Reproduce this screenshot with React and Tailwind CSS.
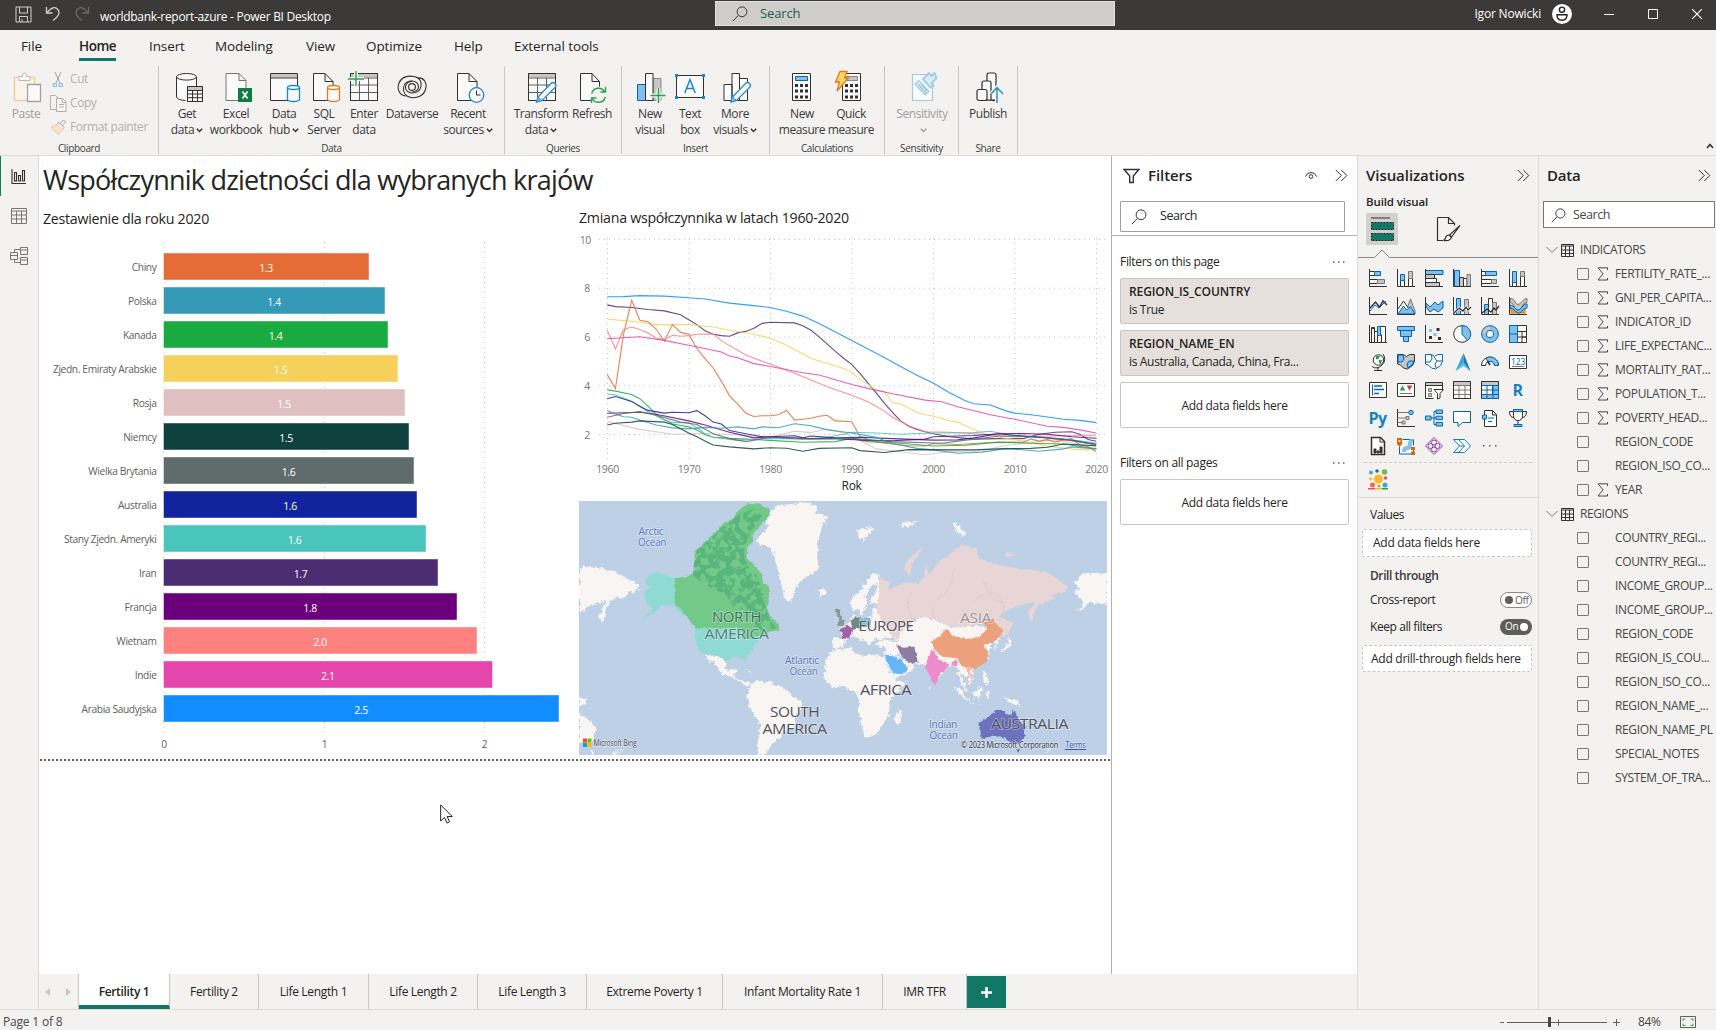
import React from "react";

const K = "#323130";
const B = "#0067b0";
const L = "#83beec";
const G = "#c8c6c4";

function Svg({ w = 30, h = 30, vb, className = "", children }) {
  return (
    <svg width={w} height={h} viewBox={vb || `0 0 ${w} ${h}`} className={"shrink-0 " + className} fill="none" stroke={K} strokeWidth="1">
      {children}
    </svg>
  );
}

/* ---------- shared glyphs ---------- */
const Loupe = ({ size = 16, color = K }) => (
  <Svg w={size} h={size} vb="0 0 16 16">
    <circle cx="10" cy="5.8" r="4.9" stroke={color} />
    <path d="M6.4 9.4L.8 15.2" stroke={color} />
  </Svg>
);
const DoubleChevron = () => (
  <Svg w={13} h={13}>
    <path d="M.8 1l5.5 5.5L.8 12M6.3 1l5.5 5.5L6.3 12" />
  </Svg>
);
const Caret = ({ color = K }) => (
  <Svg w={7} h={5} className="ml-[2px] inline-block">
    <path d="M.8 .8l2.7 2.7L6.2 .8" stroke={color} strokeWidth="1.4" />
  </Svg>
);
const Pencil = () => (
  <g>
    <path d="M11 25L24 11.5q2-2 4 0t0 4L15 28.5l-5.500 1.500z" fill="#fafafa" stroke="#2e8bd0" strokeWidth="1.300" />
    <path d="M11 25l4 3.500-5.500 1.500z" fill={L} stroke="#2e8bd0" />
  </g>
);

/* ---------- ribbon icons (30 x 30) ---------- */
const ribbonIcons = {
  get: (
    <g transform="translate(2 0)">
      <path d="M2.500 5v20q2 3 9 3.500V14h11V5z" fill="#fafafa" stroke="none" />
      <ellipse cx="12.500" cy="4.800" rx="10" ry="3.300" fill="#fafafa" />
      <path d="M2.500 5v20q1 3 9 3.500M22.500 5v9" />
      <path d="M13.500 14.500h15v15h-15z" fill="#fafafa" />
      <path d="M14 15h14v3H14z" fill={G} stroke="none" />
      <path d="M13.500 18.500h15M13.500 22h15M13.500 25.700h15M18.500 18v11M23.500 18v11M13.500 14.500h15v15h-15z" />
    </g>
  ),
  excel: (
    <g transform="translate(1 0)">
      <path d="M4 1.500h13l7 7v20H4z M17 1.500v7h7" fill="#fafafa" stroke="#7a7574" />
      <rect x="16" y="16" width="14" height="14" fill="#107c41" stroke="none" />
      <path d="M20.500 19.500l5 7M25.500 19.500l-5 7" stroke="#fff" strokeWidth="1.700" />
    </g>
  ),
  hub: (
    <g>
      <path d="M1.500 1.500h27v27h-27z" fill="#fafafa" />
      <path d="M2 2h26v3.500H2z" fill={G} stroke="none" />
      <path d="M1.500 6h27" />
      <path d="M18.500 16v11.500q1 2 6 2t6-2V16" fill="#fafafa" stroke="#1a86d0" strokeWidth="1.300" />
      <ellipse cx="24.500" cy="15.500" rx="6" ry="2" fill="#fafafa" stroke="#1a86d0" strokeWidth="1.300" />
    </g>
  ),
  sql: (
    <g transform="translate(1 0)">
      <path d="M3.500 1.500H15l8 8v19H3.500z M15 1.500v8h8" fill="#fafafa" />
      <path d="M17.500 16v11.500q1 2 6 2t6-2V16" fill="#fafafa" stroke="#e07a1f" strokeWidth="1.300" />
      <ellipse cx="23.500" cy="15.500" rx="6" ry="2" fill="#fafafa" stroke="#e07a1f" strokeWidth="1.300" />
    </g>
  ),
  enter: (
    <g>
      <path d="M1.500 1.500h27v27h-27z" fill="#fafafa" />
      <path d="M2 2h26v3.500H2z" fill={G} stroke="none" />
      <path d="M1.500 6h27M1.500 13h27M1.500 20.500h27M10.500 6v22M19.500 6v22" stroke="#605e5c" />
      <path d="M1.500 1.500h27v27h-27z" />
      <path d="M-1 7h16M7-1v16" stroke="#f3f2f1" strokeWidth="4" />
      <path d="M-1 7h16M7-1v15" stroke="#2ca04c" strokeWidth="1.400" />
    </g>
  ),
  dataverse: (
    <g strokeWidth="1.100">
      <path d="M9.500 24C3 24-.5 17.500 2 11 4.500 5 11 3.500 17 4.500s8 5.500 7 10-5 6.500-9 6.500-7-3-6.500-6.500S12 9 15 9.500" />
      <path d="M20.500 6C27 5 30.500 11 28.500 17.500S20 26.500 14 25.500 6 20 6.500 15.500 11 8.500 15.500 9s6 3 6 6-3 5-6.500 5" />
      <circle cx="15" cy="15" r="3.400" />
    </g>
  ),
  recent: (
    <g transform="translate(1 0)">
      <path d="M3.500 1.500H15l8 8v19H3.500z M15 1.500v8h8" fill="#fafafa" />
      <circle cx="22.500" cy="23" r="7.300" fill="#fafafa" stroke="#1a86d0" strokeWidth="1.300" />
      <path d="M22.500 18.500V23H26.500" />
    </g>
  ),
  transform: (
    <g transform="translate(1 0)">
      <path d="M1.500 1.500h27v27h-27z" fill="#fafafa" />
      <path d="M2 2h26v3.500H2z" fill={G} stroke="none" />
      <path d="M1.500 6h27M1.500 13h27M1.500 20.500h27M10.500 6v22M19.500 6v22" stroke="#605e5c" />
      <path d="M1.500 1.500h27v27h-27z" />
      <Pencil />
    </g>
  ),
  refresh: (
    <g transform="translate(-1 0)">
      <path d="M4.500 1.500H16l7.500 8v19h-19z M16 1.500v8h7.500" fill="#fafafa" />
      <circle cx="22.500" cy="23" r="8.500" fill="#f3f2f1" stroke="none" />
      <path d="M15.700 21.500a7 7 0 0 1 13-1.500M29.300 25a7 7 0 0 1-13 1.500M29.500 15v5h-5M15.500 31v-5h5" stroke="#2ca04c" strokeWidth="1.400" />
    </g>
  ),
  newVisual: (
    <g>
      <path d="M2.500 12.500h8v16h-8z" fill={L} stroke={B} />
      <path d="M18 6.500h8v22h-8z" fill={G} stroke="#8a8886" />
      <path d="M10.500 1.500H18v27h-7.500z" fill="#fafafa" />
      <path d="M16 23.500h14M23.500 16v14" stroke="#f3f2f1" strokeWidth="4" />
      <path d="M15.500 23.500h15M23.500 16v15" stroke="#2ca04c" strokeWidth="1.400" />
    </g>
  ),
  textBox: (
    <g>
      <path d="M1.500 3.500h27v22h-27z" fill="#fafafa" />
      <path d="M0 2h3v3H0zM27 2h3v3h-3zM0 24h3v3H0zM27 24h3v3h-3z" fill="#1a86d0" stroke="none" />
      <path d="M9.800 21L15 7.500 20.200 21M11.500 16.500h7" stroke="#1a86d0" strokeWidth="1.500" />
    </g>
  ),
  moreVisuals: (
    <g transform="translate(1.500 0)">
      <path d="M2.500 12.500h8v16h-8zM18 6.500h8v22h-8zM10.500 1.500H18v27h-7.500z" fill="#fafafa" />
      <Pencil />
    </g>
  ),
  calc: (
    <g>
      <path d="M5.500 1.500h18v27h-18z" fill="#fafafa" />
      <path d="M8.500 4.500h12v4h-12z" fill={L} stroke={B} />
      <path d="M8 12h3v3H8zM13 12h3v3h-3zM18 12h3v3h-3zM8 17.500h3v3H8zM13 17.500h3v3h-3zM18 17.500h3v3h-3zM8 23.500h3v3H8zM13 23.500h3v3h-3zM18 23.500h3v3h-3z" fill={K} stroke="none" />
    </g>
  ),
  quick: (
    <g transform="translate(1 0)">
      <path d="M5.500 1.500h18v27h-18z" fill="#fafafa" />
      <path d="M8.500 4.500h12v4h-12z" fill={G} stroke="#8a8886" />
      <path d="M8 12h3v3H8zM13 12h3v3h-3zM18 12h3v3h-3zM8 17.500h3v3H8zM13 17.500h3v3h-3zM18 17.500h3v3h-3zM8 23.500h3v3H8zM13 23.500h3v3h-3zM18 23.500h3v3h-3z" fill={K} stroke="none" />
      <path d="M3-.5h7L7.500 6h4L0 19l2.500-9H-1.500z" fill="#ffd56b" stroke="#e07a1f" strokeWidth="1.300" />
    </g>
  ),
  sensitivity: (
    <g stroke="#9fcbe6" strokeWidth="1.200">
      <path d="M5.500 2.500h20v26h-20z" fill="#f8fafb" />
      <path d="M8 12l4-3.500 10 11-4 3.500zM11 12l8 9M14 12l6 7" fill="#d8ebf7" />
      <path d="M16 7l6-6 2.500 3 3-3 2 5-5 5.500 2 2-3 2z" fill="#d8ebf7" strokeWidth="1.800" />
    </g>
  ),
  publish: (
    <g strokeWidth="1.200" transform="translate(2.500 0)">
      <path d="M11.500 10V3q0-2 2-2h5q2 0 2 2v25h-9M11.500 10" fill="#fafafa" />
      <path d="M6.500 18v-7q0-2 2-2h5q2 0 2 2v17h-8" fill="#fafafa" />
      <rect x="1.500" y="17.500" width="10" height="11" rx="2" fill="#fafafa" />
      <path d="M16 28.500h5" />
      <path d="M21.500 31V16M15.500 22l6-6.500 6 6.500" stroke="#f3f2f1" strokeWidth="4" />
      <path d="M21.500 31V16M15.500 22l6-6.500 6 6.500" stroke="#2b88c8" strokeWidth="1.400" />
    </g>
  ),
};

const ribbon = [
  { name: "Data", w: "w-[346px]", pl: "pl-[4px]", items: [
    ["get", "w-[48px]", "Get", "data", true], ["excel", "w-[50px]", "Excel", "workbook"], ["hub", "w-[46px]", "Data", "hub", true],
    ["sql", "w-[34px]", "SQL", "Server"], ["enter", "w-[46px]", "Enter", "data"], ["dataverse", "w-[50px]", "Dataverse", ""], ["recent", "w-[62px]", "Recent", "sources", true]] },
  { name: "Queries", w: "w-[117px]", pl: "pl-[4px]", items: [["transform", "w-[64px]", "Transform", "data", true], ["refresh", "w-[38px]", "Refresh", ""]] },
  { name: "Insert", w: "w-[148px]", pl: "pl-[6px]", items: [["newVisual", "w-[44px]", "New", "visual"], ["textBox", "w-[36px]", "Text", "box"], ["moreVisuals", "w-[54px]", "More", "visuals", true]] },
  { name: "Calculations", w: "w-[115px]", pl: "pl-[9px]", items: [["calc", "w-[46px]", "New", "measure"], ["quick", "w-[52px]", "Quick", "measure"]] },
  { name: "Sensitivity", w: "w-[74px]", pl: "pl-[5px]", items: [["sensitivity", "w-[64px]", "Sensitivity", "", true, true]] },
  { name: "Share", w: "w-[59px]", pl: "pl-[4px]", items: [["publish", "w-[50px]", "Publish", ""]] },
];

function RibbonButton({ item }) {
  const [icon, w, a, b, caret, off] = item;
  return (
    <div className={`flex shrink-0 flex-col items-center whitespace-nowrap text-[12px] leading-[16px] ${w} ${off ? "text-[#a19f9d]" : "text-[#3b3a39]"}`}>
      <Svg className="mb-[4px] overflow-visible">{ribbonIcons[icon]}</Svg>
      <div>{a}</div>
      <div className="flex h-[16px] items-center">{b}{caret && <Caret color={off ? "#a19f9d" : K} />}</div>
    </div>
  );
}

function Ribbon() {
  return (
    <div className="flex h-[94px] pt-[5px] text-[#3b3a39]">
      <div className="flex h-[88px] w-[159px] flex-col border-r border-[#c8c6c4]">
        <div className="flex h-[79px] pl-[9px] text-[#b3b0ad]">
          <div className="flex w-[34px] flex-col items-center pt-[6px] text-[12px] leading-[16px] text-[#a19f9d]">
            <Svg className="mb-[4px] overflow-visible">
              <g transform="translate(2 0)">
                <path d="M1.500 5.500h20v23h-20z" fill="#faf4ea" stroke="#f0cfa0" strokeWidth="1.500" />
                <path d="M6 8.500v-4h3.500q0-3.500 2-3.500t2 3.500h3.500v4z" fill="#fafafa" stroke="#bcbab8" />
                <path d="M14.500 12.500h13v17h-13z" fill="#fafafa" stroke="#a5a3a1" strokeWidth="1.300" />
              </g>
            </Svg>
            Paste
          </div>
          <div className="ml-[7px] flex flex-col text-[12px]">
            <div className="flex h-[24px] items-center gap-[3px] pt-[2px]">
              <Svg w={17} h={17}>
                <path d="M5 1l5 11M11 1L6 12" stroke="#a5a3a1" />
                <path d="M3 12.500h3.500v3H3zM9 12.500h3.500v3H9z" stroke="#8cc0e4" fill="#cfe6f6" />
              </Svg>
              Cut
            </div>
            <div className="flex h-[24px] items-center gap-[3px] pt-[2px]">
              <Svg w={17} h={17} className="overflow-visible">
                <path d="M.5.5h5l3 3v11h-8z" stroke="#b0aeac" />
                <path d="M6.500 3.500h6l3.500 3.500v9.500h-9.500zM12 3.500v4h4M9 9.500h5M9 12h5" fill="#f8f8f8" stroke="#b0aeac" />
              </Svg>
              Copy
            </div>
            <div className="flex h-[24px] items-center gap-[3px] pt-[2px]">
              <Svg w={17} h={17}>
                <path d="M1 8.500l6-3 5 5-3.500 5z" fill="#f9e2cf" stroke="#eec09a" />
                <path d="M7 5l2-1.500 5 5-1.500 2M10 5l3.500-4 2 2-3.500 4" stroke="#a5a3a1" fill="#f8f8f8" />
              </Svg>
              Format painter
            </div>
          </div>
        </div>
        <div className="text-center text-[10px] leading-[12px]">Clipboard</div>
      </div>
      {ribbon.map((g) => (
        <div key={g.name} className={`flex h-[88px] shrink-0 flex-col border-r border-[#c8c6c4] ${g.w}`}>
          <div className={`flex h-[79px] pt-[6px] ${g.pl}`}>
            {g.items.map((it, i) => <RibbonButton key={i} item={it} />)}
          </div>
          <div className="text-center text-[10px] leading-[12px]">{g.name}</div>
        </div>
      ))}
      <div className="flex flex-1 items-end justify-end pr-[2px] pb-[6px]">
        <Svg w={8} h={6}><path d="M1 5l3-3.500L7 5" strokeWidth="1.600" /></Svg>
      </div>
    </div>
  );
}

function TitleBar() {
  return (
    <div className="flex h-[30px] items-center bg-[#3b3a38] text-[12px] text-white">
      <div className="flex w-[715px] items-center">
        <Svg w={17} h={17} className="ml-[15px] -mt-[2px]">
          <g stroke="#d2d0ce"><path d="M1 1h15v15H1zM4.500 1v6h8V1M4.500 16v-5.500h8V16M7 13v3" /></g>
        </Svg>
        <Svg w={15} h={16} className="ml-[13px] -mt-[2px]"><path d="M1.500 1v6h6M2 6.500Q9-1.500 12.800 3.500T8 14.500" stroke="#d2d0ce" strokeWidth="1.300" /></Svg>
        <Svg w={15} h={16} className="ml-[15px] -mt-[2px]"><path d="M13.500 1v6h-6M13 6.500Q6-1.500 2.200 3.500T7 14.500" stroke="#6b6967" strokeWidth="1.300" /></Svg>
        <div className="ml-[10px] pt-[3px] tracking-[-0.025em]!">worldbank-report-azure - Power BI Desktop</div>
      </div>
      <div className="mb-[4px] flex h-[25px] w-[400px] items-center gap-[12px] border border-[#e1dfdd] bg-[#cfcecc] pt-[1px] pl-[16px] text-[13px] text-[#1d5a50] tracking-[-0.01em]!">
        <Loupe size={16} color="#3b3a39" />
        Search
      </div>
      <div className="mb-[3px] flex flex-1 items-center justify-end">
        <span className="tracking-[-0.015em]!">Igor Nowicki</span>
        <Svg w={20} h={20} className="ml-[11px]">
          <circle cx="10" cy="10" r="10" fill="#fff" stroke="none" />
          <circle cx="10" cy="5.700" r="2.600" stroke="#222" strokeWidth="1.400" />
          <path d="M5 10.800h10q0 5.500-5 5.500t-5-5.500z" stroke="#222" strokeWidth="1.400" />
        </Svg>
        <Svg w={10} h={12} className="ml-[32px]"><path d="M0 6.500h10" stroke="#fff" /></Svg>
        <Svg w={10} h={10} className="ml-[34px]"><path d="M.5.5h9v9h-9z" stroke="#fff" /></Svg>
        <Svg w={10} h={10} className="mr-[14px] ml-[34px]"><path d="M0 0l10 10M10 0L0 10" stroke="#fff" strokeWidth="1.200" /></Svg>
      </div>
    </div>
  );
}

function MenuBar() {
  const tabs = [["File", "w-[58px]"], ["Home", "w-[70px]"], ["Insert", "w-[66px]"], ["Modeling", "w-[91px]"], ["View", "w-[60px]"], ["Optimize", "w-[88px]"], ["Help", "w-[60px]"], ["External tools", "w-[100px]"]];
  return (
    <div className="flex h-[31px] pl-[21px] text-[13.500px] leading-[28px] text-[#252423]">
      {tabs.map(([t, w]) => (
        <div key={t} className={w}>
          <span className={"inline-block h-[31px] whitespace-nowrap pt-[2px] " + (t === "Home" ? "border-b-[3px] border-[#117865] font-semibold" : "tracking-[-0.008em]!")}>{t}</span>
        </div>
      ))}
    </div>
  );
}

/* ---------- left rail ---------- */
function Rail() {
  return (
    <div className="flex w-[39px] shrink-0 flex-col border-r border-[#dddbd9] bg-[#f3f2f1]">
      <div className="flex h-[40px] items-center border-l border-[#117865] pl-[10px]">
        <Svg w={15} h={15}><path d="M1 0v14.500h14M3.500 3.500h2V12h-2zM7.500 6.500h2V12h-2zM11.500 1.500h2V12h-2z" strokeWidth="1.100" /></Svg>
      </div>
      <div className="flex h-[40px] items-center pl-[11px]">
        <Svg w={16} h={16}><path d="M.5.500h15v15H.5zM.5 3h15M.5 7h15M.5 11h15M5.500 3v12.500M10.500 3v12.500" stroke="#797775" /></Svg>
      </div>
      <div className="flex h-[40px] items-center pl-[10px]">
        <Svg w={18} h={18}><path d="M.5 5.500h7v7h-7zM.5 8.500h7M10.500.5h7v7h-7zM10.500 3h7M10.500 10.500h7v7h-7zM10.500 13h7M4.500 5.500V2.500h6M4.500 12.500v3h6" stroke="#797775" /></Svg>
      </div>
    </div>
  );
}

/* ---------- bar chart ---------- */
const bars = [
  ["Chiny", "1.3", 205, "#e66c37"], ["Polska", "1.4", 221, "#3599b8"], ["Kanada", "1.4", 224, "#1aab40"],
  ["Zjedn. Emiraty Arabskie", "1.5", 234, "#f5d15b"], ["Rosja", "1.5", 241, "#dfbfbf"], ["Niemcy", "1.5", 245, "#0f423f"],
  ["Wielka Brytania", "1.6", 250, "#606b6b"], ["Australia", "1.6", 253, "#12239e"], ["Stany Zjedn. Ameryki", "1.6", 262, "#49c5bb"],
  ["Iran", "1.7", 274, "#4a2d73"], ["Francja", "1.8", 293, "#6a007b"], ["Wietnam", "2.0", 313, "#fd817e"],
  ["Indie", "2.1", 328.5, "#e645ab"], ["Arabia Saudyjska", "2.5", 395, "#118dff"],
];

function BarChart() {
  return (
    <svg width="530" height="515" viewBox="39 240 530 515" className="block text-[10.200px]">
      {[164, 324.500, 484.500].map((x, i) => (
        <g key={x}>
          <path d={`M${x} 242V736`} stroke="#c8c6c4" strokeDasharray="1 4" />
          <text x={x} y="748" textAnchor="middle" fill="#605e5c">{i}</text>
        </g>
      ))}
      {bars.map(([n, v, w, c], i) => (
        <g key={n}>
          <rect x="163.500" y={253 + i * 34} width={w + 0.5} height="27" fill={c} />
          <rect x="163.500" y={253 + i * 34} width={w + 0.5} height="27" fill="none" stroke="#fff" strokeOpacity=".45" />
          <text x="156.500" y={270.5 + i * 34} textAnchor="end" fill="#605e5c">{n}</text>
          <text x={163.5 + w / 2} y={271.5 + i * 34} textAnchor="middle" fill="#fff" fontSize="10.500" fontWeight="500">{v}</text>
        </g>
      ))}
    </svg>
  );
}

/* ---------- line chart: year offset from 1960, value ---------- */
const series = [
  ["#dfbfbf", "0 2.52 1 2.44 4 2.2 8 2 12 2.03 16 1.98 20 1.87 23 2.13 25 2.07 27 2.23 29 2.05 31 1.75 33 1.4 36 1.28 39 1.16 42 1.28 46 1.32 49 1.55 53 1.7 55 1.78 58 1.58 60 1.5"],
  ["#118dff", "0 7.64 2 7.65 4 7.69 7 7.67 10 7.6 12 7.55 15 7.38 18 7.28 20 7.2 22 7.05 24 6.85 26 6.55 28 6.2 30 5.85 32 5.5 34 5.15 36 4.78 38 4.42 40 4.1 42 3.7 44 3.36 45 3.25 47 3.2 49 2.95 50 2.87 52 2.8 54 2.71 56 2.62 58 2.57 60 2.48"],
  ["#4a2d73", "0 7.31 1 7.24 3 7.2 5 7.12 7 7.06 9 6.9 10 6.7 11 6.5 12 6.25 13 6.1 14 6.05 15 6.02 16 6.16 17 6.22 18 6.35 19 6.55 20 6.6 23 6.57 24 6.45 25 6.27 26 6 27 5.7 28 5.4 29 5.12 30 4.87 31 4.5 32 4.1 33 3.7 34 3.28 35 2.9 36 2.55 37 2.33 38 2.2 39 2.1 40 2.02 42 1.9 45 1.8 48 1.82 51 1.82 53 2 55 2.08 57 2.1 58 2 59 1.78 60 1.71"],
  ["#f5d15b", "0 6.73 4 6.6 6 6.5 10 6.5 13 6.4 15 6.27 18 6.1 20 5.95 22 5.65 25 5.12 27 4.9 29 4.7 30 4.55 31 4.25 32 4.05 33 3.8 34 3.75 35 3.3 36 3.25 38 2.9 39 2.8 40 2.75 42 2.55 43 2.5 44 2.35 46 2.05 48 1.88 50 1.78 52 1.65 54 1.5 57 1.4 59 1.35 60 1.46"],
  ["#e66c37", "0 4.45 1 3.87 2 6.1 3 7.5 4 6.68 5 6.62 6 6.32 7 5.82 8 6.5 9 6.18 10 6.1 11 5.52 12 5.1 13 4.72 14 4.18 15 3.58 16 3.25 17 2.86 18 2.73 19 2.76 20 2.76 21 2.8 22 2.98 23 2.58 24 2.62 25 2.66 26 2.74 27 2.78 28 2.55 30 2.51 31 1.92 32 1.78 34 1.63 37 1.53 39 1.52 40 1.62 43 1.58 47 1.66 50 1.68 51 1.67 52 1.8 53 1.72 54 1.78 55 1.68 56 1.77 57 1.82 58 1.56 59 1.5 60 1.28"],
  ["#fd817e", "0 6.27 1 5.5 2 6.3 3 6.4 4 6.3 5 6.15 6 5.95 7 5.88 8 6.06 9 6.02 10 6.05 11 6.1 13 6.12 14 5.83 17 5.25 20 4.88 23 4.5 27 3.95 30 3.6 32 3.33 34 2.95 35 2.7 37 2.35 39 2.1 42 2.08 45 2.02 50 1.9 55 1.93 60 1.96"],
  ["#e645ab", "0 5.92 4 6 7 5.85 10 5.65 14 5.38 15 5.21 16 5.14 18 4.9 20 4.78 24 4.52 26 4.43 30 4.04 32 3.88 35 3.66 39 3.4 41 3.33 43 3.13 47 2.8 50 2.62 54 2.33 56 2.28 58 2.18 60 2.05"],
  ["#1aab40", "0 3.82 1 3.77 3 3.63 4 3.46 5 3.15 6 2.82 7 2.6 8 2.42 10 2.3 11 2.18 12 1.98 13 1.88 15 1.83 17 1.8 20 1.75 24 1.67 28 1.7 30 1.83 32 1.7 36 1.63 40 1.52 44 1.55 48 1.68 52 1.63 56 1.6 58 1.5 60 1.4"],
  ["#49c5bb", "0 3.65 1 3.62 3 3.35 5 2.92 7 2.58 8 2.48 10 2.48 11 2.27 12 2.02 13 1.88 16 1.75 20 1.83 24 1.8 27 1.87 29 2 30 2.08 33 2.05 36 2 40 2.05 45 2.07 47 2.12 49 2 52 1.88 55 1.84 58 1.73 60 1.63"],
  ["#12239e", "0 3.46 1 3.55 3 3.35 4 3.15 5 2.98 7 2.87 8 2.9 10 2.88 11 2.97 12 2.76 13 2.5 14 2.42 15 2.15 17 2.02 19 1.9 20 1.9 23 1.94 24 1.85 25 1.93 28 1.85 31 1.88 35 1.82 40 1.76 43 1.77 45 1.85 48 2.02 50 1.95 53 1.88 57 1.75 60 1.59"],
  ["#6a007b", "0 2.86 2 2.88 4 2.9 6 2.82 10 2.55 12 2.38 15 2.08 18 1.85 20 1.9 24 1.83 28 1.82 32 1.75 35 1.73 39 1.8 40 1.9 45 1.95 48 2.02 51 2.03 54 2 57 1.9 60 1.84"],
  ["#3599b8", "0 2.98 1 2.83 2 2.72 3 2.7 4 2.58 6 2.38 8 2.26 10 2.22 12 2.28 14 2.25 16 2.3 18 2.22 19 2.3 21 2.27 23 2.43 25 2.35 27 2.18 30 2.05 33 1.87 35 1.62 38 1.42 40 1.36 43 1.22 46 1.27 49 1.42 53 1.3 56 1.4 57 1.48 60 1.4"],
  ["#606b6b", "0 2.7 2 2.85 4 2.93 6 2.78 9 2.5 11 2.4 13 2.02 15 1.82 17 1.7 20 1.88 25 1.8 30 1.83 35 1.7 41 1.63 44 1.76 48 1.92 52 1.92 56 1.8 60 1.56"],
  ["#0f423f", "0 2.38 1 2.45 3 2.5 4 2.55 7 2.5 8 2.4 10 2.05 11 1.9 12 1.72 13 1.56 15 1.48 18 1.4 20 1.45 22 1.43 24 1.3 26 1.42 30 1.45 31 1.33 34 1.25 37 1.37 45 1.36 48 1.4 52 1.42 54 1.47 56 1.6 60 1.53"],
];
const toPoints = (s) => {
  const n = s.split(" ").map(Number);
  const out = [];
  for (let i = 0; i < n.length; i += 2) out.push(`${(607.2 + n[i] * 8.15).toFixed(1)},${(239.3 + (10 - n[i + 1]) * 24.37).toFixed(1)}`);
  return out.join(" ");
};

function LineChart() {
  return (
    <svg width="534" height="265" viewBox="577 233 534 265" className="block text-[10.500px]">
      {[0, 1, 2, 3, 4].map((i) => {
        const y = 239.5 + i * 48.75;
        return (
          <g key={i}>
            <path d={`M599 ${y}H1105`} stroke="#c8c6c4" strokeDasharray="1 4" />
            <text x={i ? 590 : 591} y={y + 4} textAnchor="end" fill="#797775">{10 - i * 2}</text>
          </g>
        );
      })}
      {[0, 1, 2, 3, 4, 5, 6].map((i) => {
        const x = 607.5 + i * 81.5;
        return (
          <g key={i}>
            <path d={`M${x} 238V460`} stroke="#c8c6c4" strokeDasharray="1 4" />
            <text x={x} y="472.500" textAnchor="middle" fill="#797775">{1960 + i * 10}</text>
          </g>
        );
      })}
      {series.map(([c, s]) => <polyline key={c} points={toPoints(s)} fill="none" stroke={c} strokeWidth="1.100" strokeOpacity=".85" />)}
      <text x="851.500" y="489.500" textAnchor="middle" fill="#252423" fontSize="12" textLength="20">Rok</text>
    </svg>
  );
}

/* ---------- map ---------- */
const land = [
  "M390 478L420 482 440 492 448 500 445 518 455 530 475 520 482 530 468 540 480 548 500 560 528 568 522 574 495 566 470 548 440 535 425 520 405 490 410 508 395 495Z",
  "M520 570L540 558 575 562 600 572 625 582 640 603 665 618 668 640 650 665 645 695 620 705 600 730 585 745 570 765 560 780 538 780 540 740 548 690 530 660 512 620 510 600Z",
  "M540 130L570 100 562 70 580 50 600 30 640 28 680 20 715 35 705 55 742 65 725 95 715 130 712 180 715 225 680 245 660 265 645 290 635 320 622 318 610 280 600 230 590 180 565 150 545 150Z",
  "M712 285L735 282 740 295 720 302Z",
  "M26 222L50 215 85 220 130 232 165 250 200 275 195 285 170 290 160 310 130 305 115 322 105 345 95 385 85 370 90 345 105 320 80 325 50 335 40 350 26 347Z",
  "M26 605L50 615 40 630 26 630ZM26 652L45 665 75 700 68 735 26 745ZM60 760L70 775 60 778ZM155 765L130 780 120 775Z",
  "M1545 236L1500 234 1470 240 1450 265 1465 280 1450 290 1480 325 1460 350 1500 322 1545 330Z",
  "M888 238L865 242 840 280 820 300 806 325 815 350 828 338 838 362 850 340 856 318 850 305 870 270 884 268 875 300 862 320 885 330 895 300Z",
  "M755 455L758 430 790 430 775 402 800 388 812 366 822 360 826 370 850 366 870 362 875 340 890 348 905 380 940 405 940 432 915 425 890 435 882 425 870 440 862 450 850 438 838 425 845 440 828 430 812 424 795 432 785 455 765 460Z",
  "M882 438L910 436 940 438 935 450 900 455 882 450Z",
  "M905 450L940 440 960 400 995 375 1020 362 1070 385 1100 395 1150 392 1195 395 1240 400 1235 425 1230 450 1215 438 1200 490 1160 520 1158 560 1145 568 1150 545 1125 540 1145 590 1135 588 1118 540 1115 515 1100 505 1050 560 1025 510 1000 505 975 500 950 480 930 478 905 480Z",
  "M905 480L930 475 960 495 990 512 985 525 935 552 918 520Z",
  "M755 465L810 458 818 475 850 482 870 478 905 485 920 530 940 560 965 558 945 590 915 622 922 650 905 680 885 715 850 728 838 690 830 650 832 610 820 590 790 575 755 580 730 545 735 500Z",
  "M935 665L950 645 955 660 945 690 935 685Z",
  "M1105 575L1125 585 1150 622 1135 612ZM1150 625L1180 630 1150 630ZM1160 595L1185 572 1188 590 1175 610 1162 606ZM1195 590L1210 590 1200 612ZM1250 608L1285 615 1300 632 1270 628ZM1188 528L1196 530 1204 570 1190 555Z",
  "M1265 425L1272 440 1262 460 1238 470 1255 450ZM1222 445L1230 458 1222 465Z",
  "M825 105L850 98 875 97 865 115 850 135 832 130ZM945 90L975 82 1005 78 975 95ZM1100 80L1125 95 1140 125 1115 115Z",
  "M760 370L768 368 766 378Z",
  "M1385 760L1365 780 1375 765Z",
  "M745 545L720 545ZM1035 575L1040 582 1032 578ZM500 520L530 530 515 530Z",
];
const canada = "M302 249L335 247 352 235 360 215 358 170 375 155 400 130 440 88 470 70 485 45 510 28 545 25 575 42 573 62 545 95 525 120 527 140 510 155 508 190 530 210 552 240 555 262 573 275 572 320 565 340 580 370 600 385 603 408 585 405 545 425 500 432 495 410 480 399 360 399 335 365 318 340 302 327Z";
const countries = [
  ["#8fdad3", "M302 249L302 327 330 345 340 368 325 362 300 332 265 330 240 355 205 374 228 355 240 340 222 330 212 290 230 278 215 258 235 235 255 232 280 242Z"],
  ["#8fdad3", "M360 399L480 399 500 410 502 432 545 425 550 433 530 450 525 465 505 485 511 505 500 490 470 487 448 500 440 490 420 482 390 478 372 470 362 440Z"],
  ["#73c987", canada],
  ["#e8d5d5", "M888 250L920 262 915 285 935 275 965 262 1000 265 1020 245 1022 210 1035 240 1060 200 1090 180 1130 150 1170 160 1175 190 1215 205 1270 218 1330 225 1380 235 1432 275 1425 290 1385 300 1395 310 1370 320 1345 330 1325 385 1318 350 1340 322 1300 330 1255 345 1235 365 1275 385 1262 415 1245 425 1240 400 1220 378 1190 385 1150 394 1100 395 1070 385 1020 362 995 370 975 375 985 395 955 400 945 432 925 425 915 395 895 375 882 340 890 300ZM970 240L963 210 985 180 1020 155 1000 182 985 205 980 238ZM1255 172L1280 178 1270 186 1252 182Z"],
  ["#eca07c", "M1040 440L1060 425 1085 402 1100 420 1140 433 1180 425 1200 400 1190 385 1215 372 1248 410 1220 440 1190 450 1203 470 1200 500 1165 522 1125 512 1115 490 1070 485 1050 465Z"],
  ["#ee8bcb", "M1040 466L1052 470 1058 492 1090 508 1115 492 1112 515 1095 505 1075 530 1060 545 1050 572 1035 545 1022 512Z"],
  ["#8f7aa5", "M938 448L960 458 990 455 998 480 1000 505 975 502 955 485Z"],
  ["#66b5fb", "M905 480L925 480 955 498 975 525 950 537 930 535 915 510Z"],
  ["#f5db87", "M962 512L978 508 974 517Z"],
  ["#fbb0ae", "M1138 515L1154 520 1150 530 1160 550 1146 568 1154 548Z"],
  ["#a560ad", "M770 404L788 398 795 388 812 400 808 425 795 432 782 430 783 412Z"],
  ["#708a87", "M808 376L820 364 834 370 833 400 812 404Z"],
  ["#7cbdd0", "M834 370L864 368 866 394 845 396 834 388Z"],
  ["#8b9394", "M762 346L778 342 776 358 790 380 788 392 768 392 775 375Z"],
  ["#6c72be", "M1175 685L1205 665 1225 645 1250 645 1255 658 1270 660 1275 640 1290 670 1310 695 1308 725 1290 745 1270 745 1245 725 1215 722 1185 732ZM1280 762L1295 762 1290 773Z"],
];

function MapText({ x, y, size = 15, color = "#50505c", w, children }) {
  return (
    <text x={x} y={y} fontSize={size} fill={color} stroke="#fff" strokeOpacity=".4" strokeWidth="1.600" paintOrder="stroke" textAnchor="middle" textLength={w} lengthAdjust="spacingAndGlyphs">{children}</text>
  );
}

function WorldMap() {
  return (
    <svg width="528" height="254" viewBox="579 501 528 254" className="ml-[2px] block bg-[#bdd0e5]">
      <svg x="579" y="501" width="528" height="254" viewBox="26 18 1519 762" preserveAspectRatio="none">
        <defs>
          <filter id="coast" x="0" y="0" width="1600" height="800" filterUnits="userSpaceOnUse">
            <feTurbulence type="fractalNoise" baseFrequency="0.09" numOctaves="3" seed="4" />
            <feDisplacementMap in="SourceGraphic" scale="20" xChannelSelector="R" yChannelSelector="G" />
          </filter>
          <filter id="borders" x="0" y="0" width="1600" height="800" filterUnits="userSpaceOnUse">
            <feTurbulence type="fractalNoise" baseFrequency="0.1" numOctaves="2" seed="4" />
            <feDisplacementMap in="SourceGraphic" scale="10" xChannelSelector="R" yChannelSelector="G" />
          </filter>
          <filter id="relief" x="0" y="0" width="1600" height="800" filterUnits="userSpaceOnUse" colorInterpolationFilters="sRGB">
            <feTurbulence type="fractalNoise" baseFrequency="0.045 0.05" numOctaves="5" seed="9" />
            <feColorMatrix values="0 0 0 0 0.35  0 0 0 0 0.71  0 0 0 0 0.49  12 0 0 0 -5.2" />
            <feComposite in2="SourceGraphic" operator="in" />
          </filter>
        </defs>
        <g filter="url(#coast)" fill="#f8f5f3">{land.map((d) => <path key={d} d={d} />)}</g>
        <g filter="url(#borders)">{countries.map(([c, d]) => <path key={d} d={d} fill={c} />)}</g>
        <path d="M352 240L364 165 400 135 445 90 485 60 545 35 560 50 520 110 500 160 503 195 535 235 550 275 562 330 575 375 595 400 540 410 520 350 470 335 450 300 400 275Z" filter="url(#relief)" />
        <g fill="none" stroke="#cdbfc4" strokeWidth="2" opacity=".6" filter="url(#borders)">
          <path d="M1050 370Q1030 330 1060 310T1095 270 1105 220M1160 320Q1200 280 1230 300T1240 370M985 375Q960 330 985 290M1190 260L1215 310 1250 325" />
        </g>
      </svg>
      <g fill="#50505c">
        <MapText x={736.500} y={621.500} w={49} size={14.500} color="#3f6f5c">NORTH</MapText>
        <MapText x={736.500} y={638.500} w={64} size={14.500} color="#4d807c">AMERICA</MapText>
        <MapText x={794.500} y={717} w={49} size={14.500}>SOUTH</MapText>
        <MapText x={794.500} y={734} w={64} size={14.500}>AMERICA</MapText>
        <MapText x={886} y={631} w={55}>EUROPE</MapText>
        <MapText x={975.500} y={623} w={31} color="#a0949c">ASIA</MapText>
        <MapText x={885.500} y={694.500} w={51}>AFRICA</MapText>
        <MapText x={1029.500} y={729} w={77}>AUSTRALIA</MapText>
        <MapText x={651} y={534.500} w={25} size={10.500} color="#5a76c0">Arctic</MapText>
        <MapText x={652} y={545.500} w={28} size={10.500} color="#5a76c0">Ocean</MapText>
        <MapText x={802} y={663.500} w={34} size={10.500} color="#5a76c0">Atlantic</MapText>
        <MapText x={803.500} y={674.500} w={28} size={10.500} color="#5a76c0">Ocean</MapText>
        <MapText x={943} y={728} w={28} size={10.500} color="#5a76c0">Indian</MapText>
        <MapText x={943.500} y={739} w={28} size={10.500} color="#5a76c0">Ocean</MapText>
        <MapText x={615} y={746} w={43} size={9} color="#50505c">Microsoft Bing</MapText>
        <MapText x={1009.500} y={747.500} w={97} size={9} color="#33333c">© 2023 Microsoft Corporation</MapText>
        <MapText x={1075.500} y={747.500} w={20} size={9} color="#3b55b0">Terms</MapText>
        <path d="M1065 749.500h21" stroke="#3b55b0" />
      </g>
      <path d="M583 738.500h4v4h-4z" fill="#f25022" /><path d="M587.500 738.500h4v4h-4z" fill="#7fba00" />
      <path d="M583 743h4v4h-4z" fill="#00a4ef" /><path d="M587.500 743h4v4h-4z" fill="#ffb900" />
    </svg>
  );
}

function Canvas() {
  return (
    <div className="relative flex h-[818px] w-[1072px] shrink-0 flex-col bg-white text-[#252423]">
      <div className="flex h-[49px] items-center pl-[4px] text-[27px] whitespace-nowrap tracking-[-0.029em]!">Współczynnik dzietności dla wybranych krajów</div>
      <div className="flex h-[554px]">
        <div className="w-[538px]">
          <div className="flex h-[35px] items-start pl-[4px] pt-[3px] text-[14.200px] tracking-[-0.019em]!">Zestawienie dla roku 2020</div>
          <BarChart />
        </div>
        <div className="flex w-[534px] flex-col">
          <div className="flex h-[28px] items-start pl-[2px] pt-[2px] text-[14.200px] tracking-[-0.018em]!">Zmiana współczynnika w latach 1960-2020</div>
          <LineChart />
          <div className="h-[3px]" />
          <WorldMap />
        </div>
      </div>
      <svg width="1071" height="2" className="ml-px"><path d="M0 1H1071" stroke="#605e5c" strokeWidth="2" strokeDasharray="2 2" /></svg>
      <svg width="14" height="22" viewBox="0 0 14 22" className="absolute top-[648px] left-[401px]">
        <path d="M.7 1v16l3.800-3.500 2.500 5.500 2.600-1.200-2.500-5.300h5.200z" fill="#fff" stroke="#222" />
      </svg>
    </div>
  );
}

/* ---------- filters pane ---------- */
const FilterCard = ({ title, text }) => (
  <div className="flex h-[46px] w-[229px] flex-col justify-center rounded-[2px] border border-[#c8c6c4] bg-[#e5e0db] pl-[8px] text-[12px] leading-[18px] text-[#252423]">
    <div className="font-semibold tracking-[-0.008em]!">{title}</div>
    <div className="tracking-[-0.028em]!">{text}</div>
  </div>
);
const DropBox = () => (
  <div className="flex h-[46px] w-[229px] items-center justify-center rounded-[2px] border border-[#c8c6c4] bg-white pt-[2px] text-[12px] tracking-[-0.025em]!">Add data fields here</div>
);
const Dots = () => (
  <Svg w={12} h={4}><path d="M0 2h1.500M5 2h1.500M10 2h1.500" stroke="#605e5c" strokeWidth="1.500" /></Svg>
);

function Filters() {
  return (
    <div className="flex h-[818px] w-[246px] shrink-0 flex-col border-l border-[#b3b0ad] bg-white text-[#252423]">
      <div className="flex h-[80px] flex-col border-b border-[#b3b0ad] pl-[8px]">
        <div className="flex h-[39px] items-center pl-[3px] text-[15px] font-semibold">
          <Svg w={17} h={16}><path d="M1.200 1.500h14.600l-5.500 6.500v6.500H6.700V8z" strokeWidth="1.400" /></Svg>
          <span className="ml-[8px] w-[157px] tracking-[-0.005em]!">Filters</span>
          <Svg w={12} h={12}><path d="M.5 6.500Q2 2.500 6 2.500t5.500 4" /><circle cx="6" cy="6.500" r="1.800" /></Svg>
          <span className="w-[18px]" />
          <DoubleChevron />
        </div>
        <div className="mt-[6px] flex h-[31px] w-[225px] items-center gap-[13px] rounded-[1px] border border-[#a19f9d] pl-[10px] text-[12.500px]">
          <Loupe size={16} />Search
        </div>
      </div>
      <div className="flex flex-col pl-[8px]">
        <div className="flex h-[42px] items-center justify-between pr-[12px] pt-[10px] text-[12px] tracking-[-0.025em]!">Filters on this page<Dots /></div>
        <div className="flex flex-col gap-[6px]">
          <FilterCard title="REGION_IS_COUNTRY" text="is True" />
          <FilterCard title="REGION_NAME_EN" text="is Australia, Canada, China, Fra..." />
          <DropBox />
        </div>
        <div className="mt-[9px] flex h-[42px] items-center justify-between pr-[12px] pt-[10px] text-[12px] tracking-[-0.025em]!">Filters on all pages<Dots /></div>
        <DropBox />
      </div>
    </div>
  );
}

/* ---------- visual gallery icons (18 x 18) ---------- */
const axes = <path d="M.5 0v17.500H18" />;
const gallery = [
  <g>{axes}<path d="M.5 2.500h5v4h-5zM.5 10.500h8v4h-8z" fill="#fff" /><path d="M5.500 2.500h6v4h-6z" fill={L} stroke={B} /><path d="M8.500 10.500h7v4h-7z" fill={G} stroke="#797775" /></g>,
  <g>{axes}<path d="M3.500 11.500h4v6h-4zM11.500 9.500h4v8h-4z" fill="#fff" /><path d="M3.500 5.500h4v6h-4z" fill={L} stroke={B} /><path d="M11.500 2.500h4v7h-4z" fill={G} stroke="#797775" /></g>,
  <g><path d="M.5 1.500H18v4H.5z" fill={L} stroke={B} /><path d="M.5 5.500h9v4h-9zM.5 13.500h14v4H.5z" fill={G} /><path d="M.5 9.500h11v4H.5z" fill="#fff" />{axes}</g>,
  <g><path d="M1.500 1.500h5v16h-5z" fill={L} stroke={B} /><path d="M6.500 8.500h4v9h-4z" fill={G} /><path d="M10.500 9.500h3.500v8h-3.500z" fill="#fff" /><path d="M14 5.500h3.500v12H14z" fill={G} stroke="#797775" />{axes}</g>,
  <g>{axes}<path d="M.5 2.500h4v4h-4zM.5 10.500h10v4H.5z" fill="#fff" /><path d="M4.500 2.500h11v4h-11z" fill={L} stroke={B} /><path d="M10.500 10.500h5v4h-5z" fill={G} stroke="#797775" /></g>,
  <g>{axes}<path d="M3.500 13.500h4v4h-4zM11.500 7.500h4v10h-4z" fill="#fff" /><path d="M3.500 2.500h4v11h-4z" fill={L} stroke={B} /><path d="M11.500 2.500h4v5h-4z" fill={G} stroke="#797775" /></g>,
  <g>{axes}<path d="M1 14l5-6 4 3 7-7" stroke={B} /><path d="M1 11l5.500-6 4 5L14 4l4 4" strokeWidth="1.400" /></g>,
  <g><path d="M8 17L13.500 2 18 14v3z" fill={G} stroke="#797775" /><path d="M1 12l5.500-8 7.500 11" fill="#fff" /><path d="M1 17l5.500-8 3 4 4-3.500L18 17z" fill={L} stroke={B} />{axes}</g>,
  <g><path d="M1 6l4 4 5-5 3 3 5-4v7l-5 4-4-3-4 3-4-5z" fill={L} stroke={B} />{axes}</g>,
  <g><path d="M3.500 1.500h4v16h-4z" fill={L} stroke={B} /><path d="M11.500 2.500h4v15h-4z" fill={G} stroke="#797775" />{axes}<path d="M1 16l5-5 4 3 3-4 2 3 3-3" stroke="#fff" strokeWidth="2.500" /><path d="M1 16l5-5 4 3 3-4 2 3 3-3" strokeWidth="1.300" /></g>,
  <g><path d="M3.500 7.500h4v10h-4z" fill={L} stroke={B} /><path d="M7.500 1.500h4v16h-4z" fill="#fff" /><path d="M11.500 5.500h4v12h-4z" fill={G} stroke="#797775" />{axes}<path d="M1 16l5-4 4 3 3-4 2 2 3-4" strokeWidth="1.300" /></g>,
  <g><path d="M2 9h14v7H2z" fill="#f2a33c" stroke="#d67600" /><path d="M1 1.500q4 0 5 3t3 3q2 0 4-3t5-3v4q-4 0-5 4t-4 4-4-4-4-4z" fill={G} stroke="#797775" /><path d="M1 8q3 0 5 3t4 2 4-4 4-2v4q-3 0-5 3t-4 2-4-3-4-2z" fill={L} stroke={B} />{axes}</g>,
  <g>{axes}<path d="M2.500 3.500h3v14M5.500 3.500v-1h-3v15M5.500 6.500h3v11M11.500 9.500V1.500h5v16h-4v-8" fill="#fff" /><path d="M8.500 1.500h3v9h-3z" stroke={B} fill={L} /></g>,
  <g fill={L} stroke={B}><path d="M.5 1.500h17v4H.5zM3.500 5.500h11v6h-11zM6.500 11.500h5v5h-5z" /></g>,
  <g>{axes}<path d="M11.500 3h3v3h-3zM4 11h3v3H4zM13 12h3v3h-3z" fill={K} stroke="none" /><path d="M4 4h3v3H4zM8.500 8h3v3h-3z" fill={L} stroke="none" /></g>,
  <g><circle cx="9" cy="9" r="8.300" fill="#fff" /><path d="M9 .7V9l5.500 6.500A8.300 8.300 0 0 0 9 .7z" fill={L} stroke={B} /></g>,
  <g><circle cx="9" cy="9" r="6" stroke={L} strokeWidth="4.500" /><path d="M9 3a6 6 0 0 0-6 6" stroke={G} strokeWidth="4.500" /><circle cx="9" cy="9" r="8.400" stroke={B} /><circle cx="9" cy="9" r="3.700" stroke={B} fill="#fff" /></g>,
  <g><path d="M.5.5h17v17H.5z" fill="#fff" /><path d="M.5.5h8v17h-8z" fill={L} stroke={B} /><path d="M.5 9h8" stroke={B} /><path d="M8.500 6.500h9M13 6.500v11M8.500 12h9M13 12h4.500" /></g>,
  <g><circle cx="9.500" cy="7" r="5.200" fill="#fff" /><path d="M7 3l4-.5-1 3-3 1zM10 7l3 0-1 4-2-1zM5 6l2 3" fill="#2ca04c" stroke="none" /><path d="M14 1q4 6-1 11t-10 1.500M9 14v3M5 17.500h8" /></g>,
  <g><path d="M.5 1.500h6l3 2 3-2h5v7l-2 4-5 3.500-4-1-3-3-3-1z" fill={G} /><path d="M1 2h5l1 4-2 3H1zM12 8l5 0-2 4-4 3-1-4z" fill={L} stroke={B} /></g>,
  <g><path d="M.5 1.500h6l3 2 3-2h5v7l-2 4-5 3.500-4-1-3-3-3-1z" fill="#fff" stroke={B} /><path d="M6.500 2l.5 4-2 3H1M17 8h-5l-2 3 1 4M9 4l3 4" stroke={B} /></g>,
  <g stroke="none"><path d="M10.500 0L2.500 18l8-6z" fill="#3aa5dc" /><path d="M10.500 0v12l7 6z" fill="#1b76b5" /><path d="M2.500 18l8-9 7 9-7-5z" fill="#56c0e8" /></g>,
  <g><path d="M.5 12.500a8.500 8.500 0 0 1 17 0h-4a4.500 4.500 0 0 0-9 0z" fill="#fff" /><path d="M5 5a8.500 8.500 0 0 1 12.500 7.500h-4A4.500 4.500 0 0 0 7 8.800z" fill={L} stroke={B} /><path d="M9 12L6.500 8" strokeWidth="1.600" /></g>,
  <g><path d="M.5 2.500h17v13H.5z" fill="#fff" /><text x="9" y="11.500" textAnchor="middle" fontSize="8.500" textLength="14" fill={B} stroke="none">123</text><path d="M3 13.500h12" stroke="#797775" /></g>,
  <g><path d="M.5 1.500h17v15H.5z" fill="#fff" /><path d="M3.500 3.500v11" stroke={B} /><path d="M5 5h8M5 8.500h10M5 12.500h5" stroke={B} strokeWidth="1.700" /></g>,
  <g><path d="M.5 2.500h17v13H.5z" fill="#fff" /><path d="M5.500 4.500l2.800 5H2.700z" fill="#2ca04c" stroke="none" /><path d="M12.500 9.500l2.800-5H9.700z" fill="#d13438" stroke="none" /><path d="M3 12.500h12" stroke="#797775" /></g>,
  <g><path d="M17.500 8V1.500H.5v16h8" fill="#fff" /><path d="M1 2h16v2.500H1z" fill={G} stroke="none" /><path d="M.5 4.500h17" /><path d="M3.500 7.500h3v3h-3zM3.500 12.500h3v3h-3z" stroke="#797775" fill={G} /><path d="M9 8.500h9.500l-3.500 4v4.500l-2.500 1v-5.500z" fill="#fff" /></g>,
  <g><path d="M.5.500h17v17H.5z" fill="#fff" /><path d="M1 1h16v3H1z" fill={G} stroke="none" /><path d="M.5 4.500h17M.5 9h17M.5 13.500h17M6 4.500v13M12 4.500v13" stroke="#797775" /><path d="M.5.500h17v17H.5z" /></g>,
  <g><path d="M.5.500h17v17H.5z" fill="#fff" /><path d="M1 1h16v3H1z" fill={G} stroke="none" /><path d="M11.500 4.500h6v13H.5v-4h11z" fill={L} stroke={B} /><path d="M.5 4.500h17M.5 9h17M.5 13.500h17M6 4.500v13M12 4.500v13" stroke={B} /><path d="M.5 17V.500h17V5" /></g>,
  <g><text x="8.500" y="14.500" textAnchor="middle" fontSize="16" fontWeight="700" fill="#1a7fc0" stroke="none">R</text></g>,
  <g><text x="8.500" y="14.500" textAnchor="middle" fontSize="16" fontWeight="700" fill="#1a7fc0" stroke="none">Py</text></g>,
  <g>{axes}<path d="M.5 3.500H12M.5 9h9M.5 13.500h5" stroke="#797775" /><circle cx="14" cy="3.500" r="2.200" fill={L} stroke={B} /><path d="M9 7.500h3v3H9zM5 12h3v3H5z" fill={G} stroke="#797775" /></g>,
  <g fill={L} stroke={B}><path d="M6 9h3M9 2.500v13M9 2.500h2M9 9h2M9 15.500h2" /><path d="M.5 7h5.500v4H.5zM11 1h6.500v3.500H11zM11 7.200h6.500v3.500H11zM11 13.500h6.500V17H11z" /></g>,
  <path d="M.5 2.500h17v11H9.500L5 17.500v-4H.5z" fill="#fff" stroke={B} />,
  <g><path d="M3.500 1.500h8l4 4v12h-12z M11.500 1.500v4.500h4" fill="#fff" /><path d="M7 9h6M7 12.500h4" stroke={B} /><path d="M1.500 6h4v4h-4z" fill={L} stroke={B} /></g>,
  <g><path d="M4.500.5h9v6q0 5-4.500 5t-4.500-5z" fill="#fff" /><path d="M4.500 2.500h-4q0 6 4.500 6M13.500 2.500h4q0 6-4.500 6M9 11.500v4" /><path d="M4.500.5h9v2h-9zM5 15.500h8v2H5z" fill={L} stroke={B} /></g>,
  <g><path d="M2.500.500h9l4 4v13h-13z" fill="#fff" strokeWidth="1.500" /><path d="M11 1v4h4.500" /><path d="M5 12h2v4H5zM8 14h2v2H8zM11 10h2v6h-2z" fill={K} /></g>,
  <g><path d="M5.500 2.500h11v6M16.500 13v4h-14V10" stroke={B} fill="#fff" /><path d="M7 15q0-4 3-4t3-4 3-3" stroke={L} strokeWidth="4" /><path d="M0 1h5v6l-2.500 3-2.500-3zM14 10h4v3h-4zM14 14.500h4V18h-4z" fill="#d8690f" stroke="none" /><circle cx="2.500" cy="4" r="1" fill="#fff" stroke="none" /></g>,
  <g stroke="#8b3d9e"><path d="M9 .5l8.500 8.500L9 17.500.5 9z" fill="#fff" /><circle cx="9" cy="5.500" r="2.500" /><circle cx="9" cy="12.500" r="2.500" /><circle cx="5.500" cy="9" r="2.500" /><circle cx="12.500" cy="9" r="2.500" /></g>,
  <g stroke="#0f78d4" fill="#fff"><path d="M.5 2.500h11l6 6.500-6 6.500H.5L6.500 9z" /><path d="M5.500 2.500l6 6.500-6 6.500M6.500 9h5" fill="none" /></g>,
  <g fill="#605e5c" stroke="none"><path d="M2 8h1.500v1.500H2zM8 8h1.500v1.500H8zM14 8h1.500v1.500H14z" /></g>,
];

const DashedBox = ({ h, children }) => (
  <div className={`flex w-[170px] items-center rounded-[2px] border border-dashed border-[#c8c6c4] bg-white text-[12px] whitespace-nowrap text-[#252423] tracking-[-0.022em]! ${h}`}>{children}</div>
);

function Visualizations() {
  return (
    <div className="flex w-[181px] shrink-0 flex-col border-l border-[#dddbd9] bg-[#f3f2f1] text-[#252423]">
      <div className="flex h-[39px] items-center justify-between pr-[8px] pl-[8px] text-[15px] font-semibold tracking-[-0.004em]!">Visualizations<DoubleChevron /></div>
      <div className="h-[18px] pl-[8px] text-[11.500px] leading-[13px] font-semibold tracking-[-0.01em]!">Build visual</div>
      <div className="flex h-[36px] pl-[8px]">
        <div className="flex h-[32px] w-[32px] items-center justify-center rounded-[1px] bg-[#d2d0ce]">
          <Svg w={26} h={26}>
            <path d="M2 2h19" />
            <path d="M2.500 6.500h22v7h-22zM2.500 17.500h22v7h-22z" fill="#117865" stroke="#222" strokeDasharray="2 1" />
          </Svg>
        </div>
        <Svg w={26} h={26} className="mt-[3px] ml-[38px]">
          <path d="M1.500 1.500h11l6 6v2M7 24.500H1.500v-23M12.500 1.500v6h6" strokeWidth="1.200" />
          <path d="M24 9.500L13.500 19l2 2zM13 19q-3 0-3.500 3-.5 2-2 2.500 6 1 8-3z" fill="#fff" strokeWidth="1.200" />
        </Svg>
      </div>
      <svg width="181" height="10" viewBox="0 0 181 10" className="block"><path d="M0 8.500H16.500L24 1l7.500 7.500H181" fill="none" stroke="#8a8886" /></svg>
      <div className="mt-[10px] ml-[11px] grid h-[193px] w-[168px] shrink-0 grid-cols-[repeat(6,28px)] auto-rows-[28px]">
        {gallery.map((g, i) => <Svg key={i} w={18} h={18} className="overflow-visible">{g}</Svg>)}
      </div>
      <div className="ml-[6px] h-[35px] w-[168px] border-t border-dashed border-[#d2d0ce] pt-[6px] pl-[4px]">
        <Svg w={20} h={21}>
          <g stroke="none">
            <circle cx="10.500" cy="10" r="4.500" fill="#fbb829" />
            <circle cx="16.500" cy="3" r="2.800" fill="#6cc04a" /><circle cx="3" cy="3.500" r="2" fill="#4aa0d8" /><circle cx="9" cy="2" r="1.800" fill="#2b6a8a" />
            <circle cx="2.500" cy="10" r="1.500" fill="#fbb829" /><circle cx="17.500" cy="9" r="1.700" fill="#e8536a" /><circle cx="4.500" cy="16" r="2.500" fill="#f26b3a" />
            <circle cx="11" cy="17" r="1.600" fill="#8bc34a" /><circle cx="17" cy="16" r="2.500" fill="#4aa0d8" />
            <path d="M0 19h7v1.500H0z" fill="#e8536a" /><path d="M7 19h7v1.500H7z" fill="#fbb829" /><path d="M14 19h6v1.500h-6z" fill="#2ca04c" />
          </g>
        </Svg>
      </div>
      <div className="flex flex-col border-t border-[#d8d6d4] pl-[4px] text-[12px]">
        <div className="flex h-[31px] items-center pt-[3px] pl-[8px]">Values</div>
        <DashedBox h="h-[28px] pl-[10px]">Add data fields here</DashedBox>
        <div className="flex h-[35px] items-center pt-[2px] pl-[8px] font-semibold text-[#3b3a39]">Drill through</div>
        <div className="flex h-[16px] w-[170px] items-center justify-between pl-[8px]">
          Cross-report
          <div className="flex h-[16px] w-[32px] items-center gap-[2px] rounded-full border border-[#8a8886] bg-white pl-[4px] text-[10px] text-[#605e5c]"><span className="h-[8px] w-[8px] shrink-0 rounded-full bg-[#605e5c]" />Off</div>
        </div>
        <div className="mt-[10px] flex h-[17px] w-[170px] items-center justify-between pl-[8px]">
          Keep all filters
          <div className="flex h-[16px] w-[32px] items-center gap-[2px] rounded-full bg-[#605e5c] pl-[5px] text-[10px] text-white">On<span className="h-[8px] w-[8px] shrink-0 rounded-full bg-white" /></div>
        </div>
        <div className="h-[10px]" />
        <DashedBox h="h-[27px] pl-[8px]">Add drill-through fields here</DashedBox>
      </div>
    </div>
  );
}

/* ---------- data pane ---------- */
const tables = [
  ["INDICATORS", ["+FERTILITY_RATE_...", "+GNI_PER_CAPITA...", "+INDICATOR_ID", "+LIFE_EXPECTANC...", "+MORTALITY_RAT...", "+POPULATION_T...", "+POVERTY_HEAD...", "REGION_CODE", "REGION_ISO_CO...", "+YEAR"]],
  ["REGIONS", ["COUNTRY_REGI...", "COUNTRY_REGI...", "INCOME_GROUP...", "INCOME_GROUP...", "REGION_CODE", "REGION_IS_COU...", "REGION_ISO_CO...", "REGION_NAME_...", "REGION_NAME_PL", "SPECIAL_NOTES", "SYSTEM_OF_TRA..."]],
];

function DataPane() {
  return (
    <div className="flex w-[178px] shrink-0 flex-col overflow-hidden border-l border-[#dddbd9] bg-[#f3f2f1] text-[#252423]">
      <div className="flex h-[39px] items-center justify-between pr-[5px] pl-[8px] text-[15px] font-semibold tracking-[-0.015em]!">Data<DoubleChevron /></div>
      <div className="mt-[6px] ml-[4px] flex h-[27px] w-[172px] shrink-0 items-center gap-[7px] border border-[#797775] bg-white pt-[1px] pl-[7px] text-[12.500px] text-[#484644]"><Loupe size={15} />Search</div>
      <div className="mt-[10px] flex flex-col text-[12px] text-[#484644]">
        {tables.map(([t, fields]) => (
          <div key={t}>
            <div className="flex h-[24px] items-center">
              <Svg w={12} h={8} className="ml-[7px]"><path d="M.5 1L6 6.500 11.500 1" stroke="#797775" /></Svg>
              <Svg w={13} h={13} className="mr-[6px] ml-[3px]"><path d="M.5.500h12v12H.5zM.5 2h12M.5 6h12M.5 9.500h12M4.500 2v10.500M8.500 2v10.500" /></Svg>
              {t}
            </div>
            {fields.map((f, i) => (
              <div key={i} className="flex h-[24px] items-center whitespace-nowrap tracking-[-0.03em]!">
                <span className="ml-[38px] h-[12px] w-[12px] shrink-0 rounded-[1px] border border-[#797775]" />
                <span className="ml-[9px] w-[17px] shrink-0">
                  {f[0] === "+" && <Svg w={11} h={14} className="-ml-px"><path d="M10.500 3V.800H1l5 6-5 6.200h9.500V11" stroke="#484644" /></Svg>}
                </span>
                {f.replace("+", "")}
              </div>
            ))}
          </div>
        ))}
      </div>
    </div>
  );
}

/* ---------- bottom ---------- */
function PageTabs() {
  const tabs = [["Fertility 1", "w-[91px]"], ["Fertility 2", "w-[89px]"], ["Life Length 1", "w-[110px]"], ["Life Length 2", "w-[109px]"], ["Life Length 3", "w-[109px]"], ["Extreme Poverty 1", "w-[136px]"], ["Infant Mortality Rate 1", "w-[160px]"], ["IMR TFR", "w-[84px]"]];
  return (
    <div className="flex h-[35px] bg-[#f3f2f1] text-[12px] text-[#252423]">
      <div className="flex w-[40px] items-center justify-center gap-[16px] border-r border-[#c8c6c4] pr-[2px]">
        <Svg w={5} h={8}><path d="M5 0v8L0 4z" fill="#c8c6c4" stroke="none" /></Svg>
        <Svg w={5} h={8}><path d="M0 0v8l5-4z" fill="#c8c6c4" stroke="none" /></Svg>
      </div>
      {tabs.map(([t, w], i) => (
        <div key={t} className={`flex h-[35px] items-center justify-center whitespace-nowrap border-r border-[#c8c6c4] tracking-[-0.028em]! ${w} ${i === 0 ? "border-b-4 border-b-[#117865] bg-white pt-[4px] font-semibold" : ""}`}>{t}</div>
      ))}
      <div className="mt-[2px] flex h-[32px] w-[39px] items-center justify-center bg-[#117865]">
        <Svg w={11} h={11}><path d="M0 5.500h11M5.500 0v11" stroke="#fff" strokeWidth="2.500" /></Svg>
      </div>
    </div>
  );
}

function StatusBar() {
  return (
    <div className="flex h-[21px] items-center justify-between border-t border-[#dddbd9] bg-[#f3f2f1] pt-[3px] pr-[20px] pl-[3px] text-[12px] text-[#484644]">
      <span className="tracking-[-0.015em]!">Page 1 of 8</span>
      <div className="flex items-center">
        <Svg w={122} h={12} className="mr-[16px]">
          <path d="M0 6.500h4M7 6.500h100M113 6.500h7M116.500 3v7M58.500 3.500v6" stroke="#605e5c" />
          <path d="M49.500 1v10" stroke="#484644" strokeWidth="3" />
        </Svg>
        <span className="w-[42px]">84%</span>
        <Svg w={16} h={12}>
          <path d="M.5.500h15v11H.5z" stroke="#605e5c" />
          <path d="M3 5V3h2.500M10.500 3H13v2M13 7.500v2h-2.500M5.500 9.500H3v-2" stroke="#2ca04c" />
        </Svg>
      </div>
    </div>
  );
}

export default function App() {
  return (
    <div className="flex h-[1030px] w-[1716px] flex-col overflow-hidden bg-[#f3f2f1] font-['Open_Sans','Noto_Sans',sans-serif] [&_*]:tracking-[-0.035em]">
      <TitleBar />
      <MenuBar />
      <Ribbon />
      <div className="flex h-[854px] border-t border-[#dddbd9]">
        <Rail />
        <div className="flex w-[1318px] shrink-0 flex-col">
          <div className="flex h-[818px]">
            <Canvas />
            <Filters />
          </div>
          <PageTabs />
        </div>
        <Visualizations />
        <DataPane />
      </div>
      <StatusBar />
    </div>
  );
}
